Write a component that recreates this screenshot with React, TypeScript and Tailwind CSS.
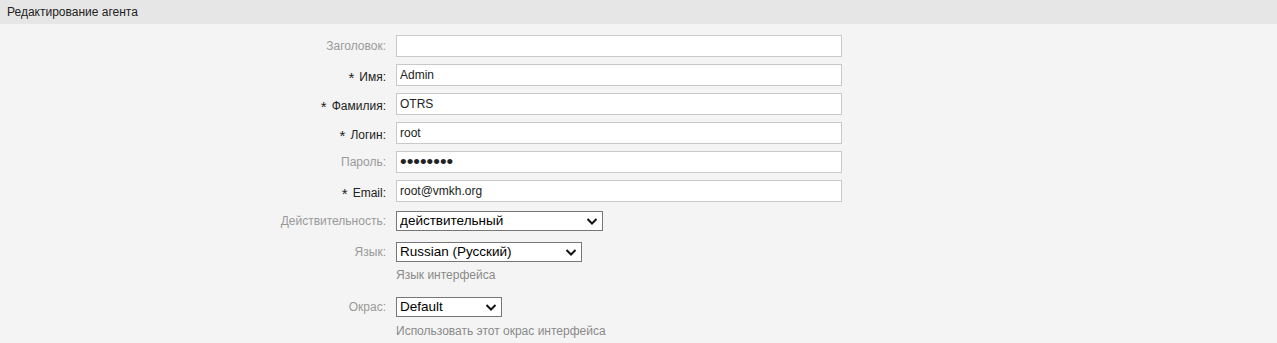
import React from 'react';

function Label({ text, required }: { text: string; required?: boolean }) {
  return (
    <label
      className={
        'w-[396px] shrink-0 pr-[10px] text-right text-[12px] leading-none ' +
        (required ? 'text-[#222]' : 'text-[#9a9a9a]')
      }
    >
      {required && <span className="mr-[5px] inline-block translate-y-[2px] text-[15px]">*</span>}
      {text}
    </label>
  );
}

function TextRow({ label, value, required, password }: { label: string; value: string; required?: boolean; password?: boolean }) {
  return (
    <div className="flex h-[22px] items-center">
      <Label text={label} required={required} />
      <input
        type="text"
        defaultValue={value}
        readOnly
        className={
          'block h-[22px] w-[446px] border border-[#c9c9c9] bg-white px-[3px] text-[#222] outline-none ' +
          (password ? 'text-[19px] leading-none' : 'text-[12px]')
        }
      />
    </div>
  );
}

function SelectRow({ label, value, width }: { label: string; value: string; width: string }) {
  return (
    <div className="flex h-[20px] items-center">
      <Label text={label} />
      <div className={'relative h-[20px] ' + width}>
        <select
          defaultValue={value}
          className="block h-[20px] w-full appearance-none border border-[#767676] bg-white pl-[3px] text-[13.5px] leading-none text-black outline-none"
        >
          <option>{value}</option>
        </select>
        <svg
          className="pointer-events-none absolute right-[5px] top-[6px]"
          width="12"
          height="9"
          viewBox="0 0 12 9"
          fill="none"
        >
          <path d="M1.5 2 L6 6.5 L10.5 2" stroke="#111" strokeWidth="2" />
        </svg>
      </div>
    </div>
  );
}

export default function App() {
  return (
    <div className="min-h-[343px] w-full bg-[#f4f4f4] font-['Liberation_Sans',Arial,sans-serif]">
      <div className="flex h-[24px] items-center bg-[#e6e6e6] px-[7px] text-[12px] text-[#222]">
        Редактирование агента
      </div>

      <div className="flex flex-col pt-[11px]">
        <div className="flex flex-col gap-[7px]">
          <TextRow label="Заголовок:" value="" />
          <TextRow label="Имя:" value="Admin" required />
          <TextRow label="Фамилия:" value="OTRS" required />
          <TextRow label="Логин:" value="root" required />
          <TextRow label="Пароль:" value="••••••••" password />
          <TextRow label="Email:" value="root@vmkh.org" required />
        </div>

        <div className="mt-[9px]">
          <SelectRow label="Действительность:" value="действительный" width="w-[207px]" />
        </div>

        <div className="mt-[11px]">
          <SelectRow label="Язык:" value="Russian (Русский)" width="w-[186px]" />
        </div>
        <div className="mt-[4px] pl-[396px] text-[12px] leading-[18px] text-[#8a8a8a]">Язык интерфейса</div>

        <div className="mt-[13px]">
          <SelectRow label="Окрас:" value="Default" width="w-[106px]" />
        </div>
        <div className="mt-[5px] pl-[396px] text-[12px] leading-[18px] text-[#8a8a8a]">Использовать этот окрас интерфейса</div>
      </div>
    </div>
  );
}
